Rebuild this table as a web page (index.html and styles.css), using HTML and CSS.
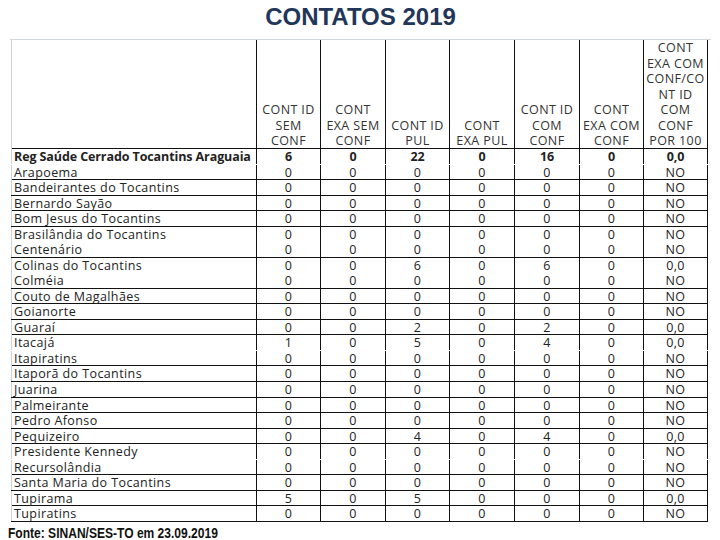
FILE: index.html
```html
<!DOCTYPE html>
<html lang="pt">
<head>
<meta charset="utf-8">
<title>CONTATOS 2019</title>
<link rel="stylesheet" href="styles.css">
</head>
<body>
<header class="title-bar"><h1 class="title">CONTATOS 2019</h1></header>
<div class="sheet">
  <div class="row head">
    <div class="cell name"></div>
    <div class="cell">CONT ID<br>SEM<br>CONF</div>
    <div class="cell">CONT<br>EXA SEM<br>CONF</div>
    <div class="cell">CONT ID<br>PUL</div>
    <div class="cell">CONT<br>EXA PUL</div>
    <div class="cell">CONT ID<br>COM<br>CONF</div>
    <div class="cell">CONT<br>EXA COM<br>CONF</div>
    <div class="cell last">CONT<br>EXA COM<br>CONF/CO<br>NT ID<br>COM<br>CONF<br>POR 100</div>
  </div>
  <div class="row total open"><div class="cell name">Reg Saúde Cerrado Tocantins Araguaia</div><div class="cell">6</div><div class="cell">0</div><div class="cell">22</div><div class="cell">0</div><div class="cell">16</div><div class="cell">0</div><div class="cell last">0,0</div></div>
  <div class="row"><div class="cell name">Arapoema</div><div class="cell">0</div><div class="cell">0</div><div class="cell">0</div><div class="cell">0</div><div class="cell">0</div><div class="cell">0</div><div class="cell last">NO</div></div>
  <div class="row"><div class="cell name">Bandeirantes do Tocantins</div><div class="cell">0</div><div class="cell">0</div><div class="cell">0</div><div class="cell">0</div><div class="cell">0</div><div class="cell">0</div><div class="cell last">NO</div></div>
  <div class="row"><div class="cell name">Bernardo Sayão</div><div class="cell">0</div><div class="cell">0</div><div class="cell">0</div><div class="cell">0</div><div class="cell">0</div><div class="cell">0</div><div class="cell last">NO</div></div>
  <div class="row"><div class="cell name">Bom Jesus do Tocantins</div><div class="cell">0</div><div class="cell">0</div><div class="cell">0</div><div class="cell">0</div><div class="cell">0</div><div class="cell">0</div><div class="cell last">NO</div></div>
  <div class="row open"><div class="cell name">Brasilândia do Tocantins</div><div class="cell">0</div><div class="cell">0</div><div class="cell">0</div><div class="cell">0</div><div class="cell">0</div><div class="cell">0</div><div class="cell last">NO</div></div>
  <div class="row"><div class="cell name">Centenário</div><div class="cell">0</div><div class="cell">0</div><div class="cell">0</div><div class="cell">0</div><div class="cell">0</div><div class="cell">0</div><div class="cell last">NO</div></div>
  <div class="row open"><div class="cell name">Colinas do Tocantins</div><div class="cell">0</div><div class="cell">0</div><div class="cell">6</div><div class="cell">0</div><div class="cell">6</div><div class="cell">0</div><div class="cell last">0,0</div></div>
  <div class="row"><div class="cell name">Colméia</div><div class="cell">0</div><div class="cell">0</div><div class="cell">0</div><div class="cell">0</div><div class="cell">0</div><div class="cell">0</div><div class="cell last">NO</div></div>
  <div class="row"><div class="cell name">Couto de Magalhães</div><div class="cell">0</div><div class="cell">0</div><div class="cell">0</div><div class="cell">0</div><div class="cell">0</div><div class="cell">0</div><div class="cell last">NO</div></div>
  <div class="row"><div class="cell name">Goianorte</div><div class="cell">0</div><div class="cell">0</div><div class="cell">0</div><div class="cell">0</div><div class="cell">0</div><div class="cell">0</div><div class="cell last">NO</div></div>
  <div class="row"><div class="cell name">Guaraí</div><div class="cell">0</div><div class="cell">0</div><div class="cell">2</div><div class="cell">0</div><div class="cell">2</div><div class="cell">0</div><div class="cell last">0,0</div></div>
  <div class="row open"><div class="cell name">Itacajá</div><div class="cell">1</div><div class="cell">0</div><div class="cell">5</div><div class="cell">0</div><div class="cell">4</div><div class="cell">0</div><div class="cell last">0,0</div></div>
  <div class="row"><div class="cell name">Itapiratins</div><div class="cell">0</div><div class="cell">0</div><div class="cell">0</div><div class="cell">0</div><div class="cell">0</div><div class="cell">0</div><div class="cell last">NO</div></div>
  <div class="row"><div class="cell name">Itaporã do Tocantins</div><div class="cell">0</div><div class="cell">0</div><div class="cell">0</div><div class="cell">0</div><div class="cell">0</div><div class="cell">0</div><div class="cell last">NO</div></div>
  <div class="row"><div class="cell name">Juarina</div><div class="cell">0</div><div class="cell">0</div><div class="cell">0</div><div class="cell">0</div><div class="cell">0</div><div class="cell">0</div><div class="cell last">NO</div></div>
  <div class="row"><div class="cell name">Palmeirante</div><div class="cell">0</div><div class="cell">0</div><div class="cell">0</div><div class="cell">0</div><div class="cell">0</div><div class="cell">0</div><div class="cell last">NO</div></div>
  <div class="row"><div class="cell name">Pedro Afonso</div><div class="cell">0</div><div class="cell">0</div><div class="cell">0</div><div class="cell">0</div><div class="cell">0</div><div class="cell">0</div><div class="cell last">NO</div></div>
  <div class="row"><div class="cell name">Pequizeiro</div><div class="cell">0</div><div class="cell">0</div><div class="cell">4</div><div class="cell">0</div><div class="cell">4</div><div class="cell">0</div><div class="cell last">0,0</div></div>
  <div class="row open"><div class="cell name">Presidente Kennedy</div><div class="cell">0</div><div class="cell">0</div><div class="cell">0</div><div class="cell">0</div><div class="cell">0</div><div class="cell">0</div><div class="cell last">NO</div></div>
  <div class="row"><div class="cell name">Recursolândia</div><div class="cell">0</div><div class="cell">0</div><div class="cell">0</div><div class="cell">0</div><div class="cell">0</div><div class="cell">0</div><div class="cell last">NO</div></div>
  <div class="row"><div class="cell name">Santa Maria do Tocantins</div><div class="cell">0</div><div class="cell">0</div><div class="cell">0</div><div class="cell">0</div><div class="cell">0</div><div class="cell">0</div><div class="cell last">NO</div></div>
  <div class="row"><div class="cell name">Tupirama</div><div class="cell">5</div><div class="cell">0</div><div class="cell">5</div><div class="cell">0</div><div class="cell">0</div><div class="cell">0</div><div class="cell last">0,0</div></div>
  <div class="row"><div class="cell name">Tupiratins</div><div class="cell">0</div><div class="cell">0</div><div class="cell">0</div><div class="cell">0</div><div class="cell">0</div><div class="cell">0</div><div class="cell last">NO</div></div>
</div>
<p class="source"><span class="source-text">Fonte: SINAN/SES-TO em 23.09.2019</span></p>
</body>
</html>
```

FILE: styles.css
```css
* { box-sizing: border-box; }
html, body { margin: 0; padding: 0; background: #ffffff; }
body { width: 720px; height: 540px; overflow: hidden; }

.title-bar {
  margin: 0 9px 0 10px;
  padding-top: 5px;
  height: 40px;
  border-bottom: 1px solid #cfd6dc;
  text-align: center;
}
.title {
  margin: 0;
  font-family: "Liberation Sans", Arial, sans-serif;
  font-weight: bold;
  font-size: 24px;
  line-height: 24px;
  color: #22365a;
}

.sheet {
  margin-left: 11px;
  width: 697px;
  font-family: "Open Sans", "DejaVu Sans", sans-serif;
  font-size: 12.5px;
  letter-spacing: 0.4px;
  color: #222222;
}
.row {
  display: grid;
  grid-template-columns: 245px 64px 65px 64px 65px 65px 64px 65px;
  height: 15.54px;
  border-bottom: 1px solid #111111;
}
.row.open { border-bottom-color: transparent; }
.row.head {
  height: 109px;
  border-bottom: 1px solid #111111;
}
.cell {
  border-left: 1px solid #111111;
  text-align: center;
  line-height: 15px;
  white-space: nowrap;
}
.cell.name {
  border-left: 1px solid #cfd3d6;
  text-align: left;
  padding-left: 2px;
}
.cell.last { border-right: 1px solid #111111; }
.head .cell {
  display: flex;
  flex-direction: column;
  justify-content: flex-end;
  line-height: 15.5px;
  padding-bottom: 2px;
  color: #333333;
}
.total .cell {
  font-weight: bold;
  letter-spacing: -0.1px;
}

.source {
  margin: 5px 0 0 8px;
  font-family: "Liberation Sans", Arial, sans-serif;
  font-weight: bold;
  font-size: 14px;
  line-height: 13px;
  color: #111111;
}
.source-text {
  display: inline-block;
  transform: scaleX(0.86);
  transform-origin: left center;
}
```
